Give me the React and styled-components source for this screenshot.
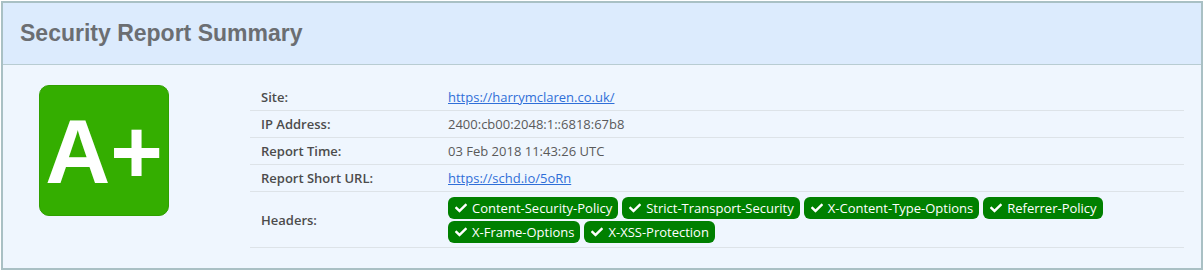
import React from 'react'
import styled, { createGlobalStyle } from 'styled-components'
import { FaCheck } from 'react-icons/fa'

const GlobalStyle = createGlobalStyle`
  html, body {
    margin: 0;
    padding: 0;
    background: #ffffff;
  }
`

const Panel = styled.div`
  margin: 1px 1px 0 1px;
  width: 1198px;
  border: 2px solid #a9c0c4;
  background: #eff6fe;
  font-family: "Open Sans", "Liberation Sans", sans-serif;
`

const Header = styled.div`
  height: 61px;
  background: #dcebfd;
  border-bottom: 1px solid #b8ccd2;
  padding-left: 17px;
`

const Title = styled.h2`
  margin: 0;
  font-family: "Liberation Sans", Arial, sans-serif;
  font-size: 23px;
  line-height: 61px;
  font-weight: bold;
  color: #6b6e72;
`

const Body = styled.div`
  display: grid;
  grid-template-columns: 130px 1fr;
  column-gap: 81px;
  padding: 19px 17px 20px 36px;
`

const Grade = styled.div`
  width: 128px;
  height: 127px;
  margin-top: 1px;
  border: 1px solid #30a000;
  border-radius: 10px;
  background: #34ae00;
  color: #ffffff;
  display: flex;
  align-items: center;
  justify-content: center;
  font-family: "Liberation Sans", Arial, sans-serif;
  font-weight: bold;
  font-size: 90px;
  line-height: 1;
  padding-top: 2px;
  box-sizing: content-box;
`

const Table = styled.table`
  width: 100%;
  border-collapse: collapse;
  font-size: 13px;
  color: #555;
`

const Row = styled.tr`
  border-bottom: 1px solid #dde3e8;
`

const Label = styled.th`
  width: 187px;
  text-align: left;
  font-weight: 600;
  color: #4c4c4c;
  padding: 5px 0 5px 11px;
  line-height: 16px;
  vertical-align: middle;
`

const Value = styled.td`
  padding: ${p => (p.$tags ? '5px 0 4px 0' : '5px 0')};
  line-height: 16px;
  color: #5a5a5a;
`

const Link = styled.a`
  color: #2f6fd8;
  text-decoration: underline;
`

const Tags = styled.div`
  display: flex;
  flex-wrap: wrap;
  column-gap: 4px;
  row-gap: 2px;
`

const Tag = styled.span`
  display: inline-flex;
  align-items: center;
  gap: 5px;
  height: 22px;
  padding: 0 6px 0 7px;
  border-radius: 6px;
  background: #008000;
  color: #ffffff;
  font-size: 13px;
  box-sizing: border-box;

  svg {
    width: 12px;
    height: 12px;
  }
`

const headers = [
  'Content-Security-Policy',
  'Strict-Transport-Security',
  'X-Content-Type-Options',
  'Referrer-Policy',
  'X-Frame-Options',
  'X-XSS-Protection',
]

export default function App() {
  return (
    <>
      <GlobalStyle />
      <Panel>
        <Header>
          <Title>Security Report Summary</Title>
        </Header>
        <Body>
          <Grade>A+</Grade>
          <Table>
            <tbody>
              <Row>
                <Label>Site:</Label>
                <Value><Link href="#">https://harrymclaren.co.uk/</Link></Value>
              </Row>
              <Row>
                <Label>IP Address:</Label>
                <Value>2400:cb00:2048:1::6818:67b8</Value>
              </Row>
              <Row>
                <Label>Report Time:</Label>
                <Value>03 Feb 2018 11:43:26 UTC</Value>
              </Row>
              <Row>
                <Label>Report Short URL:</Label>
                <Value><Link href="#">https://schd.io/5oRn</Link></Value>
              </Row>
              <Row>
                <Label>Headers:</Label>
                <Value $tags>
                  <Tags>
                    {headers.map(h => (
                      <Tag key={h}><FaCheck />{h}</Tag>
                    ))}
                  </Tags>
                </Value>
              </Row>
            </tbody>
          </Table>
        </Body>
      </Panel>
    </>
  )
}
